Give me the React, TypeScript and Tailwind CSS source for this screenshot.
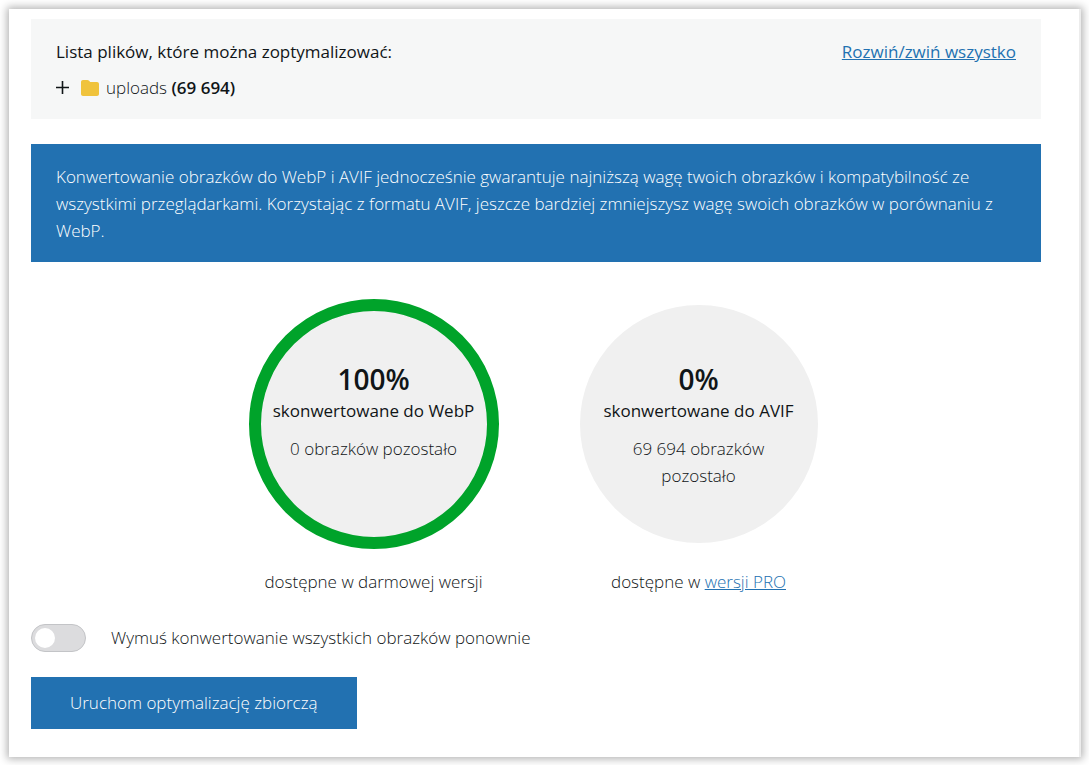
import { useState, FormEvent, ReactNode } from 'react'
import { clsx } from 'clsx'

interface ProgressCircleProps {
  id: string
  format: string
  percent: number
  remaining: string
  children: ReactNode
}

const RADIUS = 119
const CIRCUMFERENCE = 2 * Math.PI * RADIUS

function ProgressCircle({ id, format, percent, remaining, children }: ProgressCircleProps) {
  return (
    <div className="w-[250px] text-center">
      <div className="relative h-[250px]">
        <svg viewBox="0 0 250 250" className="absolute inset-0 h-full w-full -rotate-90" aria-hidden="true">
          <circle cx="125" cy="125" r={RADIUS} fill="#f0f0f0" />
          {percent > 0 && (
            <circle
              cx="125"
              cy="125"
              r={RADIUS}
              fill="none"
              stroke="#00a32a"
              strokeWidth="12"
              strokeDasharray={`${(CIRCUMFERENCE * percent) / 100} ${CIRCUMFERENCE}`}
            />
          )}
        </svg>
        <div id={id} className="relative px-5 pt-[63px]">
          <p className="text-[28px] leading-[35px] font-semibold">{percent}%</p>
          <p className="leading-[27px] font-medium whitespace-nowrap">skonwertowane do {format}</p>
          <p className="mx-auto mt-[11px] max-w-[180px] leading-[27px]">{remaining}</p>
        </div>
      </div>
      <p className="mt-[19px] leading-[27px]">{children}</p>
    </div>
  )
}

function FolderIcon() {
  return (
    <svg viewBox="0 0 18 16" className="h-4 w-[18px]" aria-hidden="true">
      <path d="M2 0h4.300c.8 0 1.300.2 1.800.7L9.200 2H16c1.100 0 2 .9 2 2v10c0 1.100-.9 2-2 2H2c-1.100 0-2-.9-2-2V2C0 .9.9 0 2 0z" fill="#f0c33c" />
    </svg>
  )
}

export default function App() {
  const [force, setForce] = useState(false)
  const [expanded, setExpanded] = useState(false)

  const handleSubmit = (e: FormEvent) => e.preventDefault()

  return (
    <div className="min-h-screen bg-white pt-[9px] pr-2 pb-2 pl-[9px] font-['Open_Sans',sans-serif] text-[17px] font-light text-[#101517]">
      <form
        onSubmit={handleSubmit}
        className="border-r-2 border-[#ececec] bg-white pt-[10px] pr-[38px] pb-7 pl-[22px] shadow-[0_0_8px_2px_rgba(0,0,0,0.3)]"
      >
        <section className="bg-[#f6f7f7] px-[25px] pt-[19px] pb-[18px]">
          <div className="flex items-center justify-between gap-4 leading-[27px]">
            <h2 className="font-medium">Lista plików, które można zoptymalizować:</h2>
            <a
              href="#tree"
              onClick={() => setExpanded(v => !v)}
              className="font-medium text-[#2271b1] underline"
            >
              Rozwiń/zwiń wszystko
            </a>
          </div>
          <button
            id="tree"
            type="button"
            aria-expanded={expanded}
            onClick={() => setExpanded(v => !v)}
            className="mt-[9px] flex items-center leading-[27px]"
          >
            <svg viewBox="0 0 14 14" className="h-[14px] w-[14px]" aria-hidden="true">
              <path d="M6.500 0v13M0 6.500h13" stroke="currentColor" strokeWidth="1.600" />
            </svg>
            <span className="mr-[7px] ml-[11px]">
              <FolderIcon />
            </span>
            <span>
              uploads <strong className="font-semibold">(69 694)</strong>
            </span>
          </button>
        </section>

        <p className="mt-[25px] bg-[#2271b1] px-[25px] pt-[19px] pb-[18px] leading-[27px] text-white">
          Konwertowanie obrazków do WebP i AVIF jednocześnie gwarantuje najniższą wagę twoich obrazków i kompatybilność ze
          wszystkimi przeglądarkami. Korzystając z formatu AVIF, jeszcze bardziej zmniejszysz wagę swoich obrazków w
          porównaniu z WebP.
        </p>

        <div className="mt-[37px] flex flex-wrap justify-center gap-x-[75px] gap-y-6">
          <ProgressCircle id="webp" format="WebP" percent={100} remaining="0 obrazków pozostało">
            dostępne w darmowej wersji
          </ProgressCircle>
          <ProgressCircle id="avif" format="AVIF" percent={0} remaining="69 694 obrazków pozostało">
            dostępne w{' '}
            <a href="#pro" className="text-[#2271b1] underline">
              wersji PRO
            </a>
          </ProgressCircle>
        </div>

        <label className="mt-[29px] flex w-fit cursor-pointer items-center gap-[25px] leading-7">
          <input
            type="checkbox"
            className="peer sr-only"
            checked={force}
            onChange={e => setForce(e.target.checked)}
          />
          <span
            className={clsx(
              'flex h-7 w-[55px] items-center rounded-full border px-[3px] transition-colors',
              force ? 'justify-end border-[#2271b1] bg-[#2271b1]' : 'border-[#c3c4c7] bg-[#dcdcde]',
            )}
          >
            <span className="h-5 w-5 rounded-full bg-white" />
          </span>
          Wymuś konwertowanie wszystkich obrazków ponownie
        </label>

        <button type="submit" className="mt-[25px] bg-[#2271b1] px-[39px] py-3 leading-7 text-white">
          Uruchom optymalizację zbiorczą
        </button>
      </form>
    </div>
  )
}
